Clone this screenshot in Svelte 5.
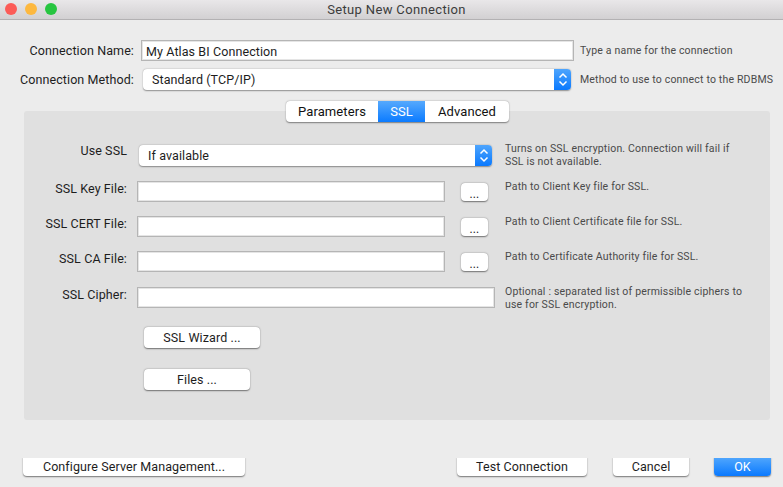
<script>
  const rows = [
    { label: 'SSL Key File:', hint: 'Path to Client Key file for SSL.' },
    { label: 'SSL CERT File:', hint: 'Path to Client Certificate file for SSL.' },
    { label: 'SSL CA File:', hint: 'Path to Certificate Authority file for SSL.' }
  ];
</script>

{#snippet stepper()}
  <span class="stepper">
    <svg width="10" height="15" viewBox="0 0 10 15" fill="none" stroke="#fff" stroke-width="1.5">
      <path d="M1.5 5.5 5 2l3.5 3.5" />
      <path d="M1.5 9.5 5 13l3.5-3.5" />
    </svg>
  </span>
{/snippet}

<div class="window">
  <header class="titlebar">
    <div class="lights">
      <span class="light red"></span>
      <span class="light yellow"></span>
      <span class="light green"></span>
    </div>
    <span class="title">Setup New Connection</span>
  </header>

  <div class="top-form">
    <label for="conn-name">Connection Name:</label>
    <input id="conn-name" class="name-input" type="text" value="My Atlas BI Connection" />
    <span class="hint">Type a name for the connection</span>

    <span class="label">Connection Method:</span>
    <div class="select method">
      <span>Standard (TCP/IP)</span>
      {@render stepper()}
    </div>
    <span class="hint">Method to use to connect to the RDBMS</span>
  </div>

  <div class="tabs">
    <button class="tab params">Parameters</button>
    <button class="tab ssl">SSL</button>
    <button class="tab advanced">Advanced</button>
  </div>

  <section class="panel">
    <div class="grid">
      <span class="label use-ssl">Use SSL</span>
      <div class="select ssl-select">
        <span>If available</span>
        {@render stepper()}
      </div>
      <p class="note first">Turns on SSL encryption. Connection will fail if<br />SSL is not available.</p>

      {#each rows as row}
        <span class="label">{row.label}</span>
        <div class="file">
          <input type="text" />
          <button class="btn dots">...</button>
        </div>
        <p class="note">{row.hint}</p>
      {/each}

      <span class="label">SSL Cipher:</span>
      <input type="text" class="cipher" />
      <p class="note cipher-note">Optional : separated list of permissible ciphers to<br />use for SSL encryption.</p>
    </div>

    <button class="btn wizard">SSL Wizard ...</button>
    <button class="btn files">Files ...</button>
  </section>

  <footer class="actions">
    <button class="btn cut configure">Configure Server Management...</button>
    <button class="btn cut test">Test Connection</button>
    <button class="btn cut cancel">Cancel</button>
    <button class="btn cut ok">OK</button>
  </footer>
</div>

<style>
  :global(body) {
    margin: 0;
    background: #ececec;
  }

  .window {
    width: 783px;
    height: 487px;
    overflow: hidden;
    background: #ececec;
    color: #1d1d1d;
    font-family: Roboto, "Liberation Sans", sans-serif;
    font-size: 12.5px;
    letter-spacing: 0.1px;
  }

  .titlebar {
    display: flex;
    position: relative;
    align-items: center;
    justify-content: center;
    box-sizing: border-box;
    height: 20px;
    border-bottom: 1px solid #b3b1b3;
    background: linear-gradient(#e9e7e9, #d2d0d2);
  }

  .title {
    color: #3c3c3c;
    margin-left: 10px;
    font-size: 13px;
    letter-spacing: 0.35px;
  }

  .lights {
    position: absolute;
    top: 3px;
    left: 5px;
    display: flex;
    gap: 8px;
  }

  .light {
    width: 12px;
    height: 12px;
    border-radius: 50%;
  }

  .red { background: #fc5b57; }
  .yellow { background: #fdb83f; }
  .green { background: #27c540; }

  .top-form {
    display: grid;
    grid-template-columns: 134px 440px auto;
    grid-template-rows: 29px 21px;
    margin-top: 20px;
    align-items: start;
  }

  .top-form label,
  .top-form .label {
    text-align: right;
    line-height: 22px;
  }

  .name-input {
    margin-left: 7px;
    width: 433px;
    padding: 1px 4px 0;
  }

  .method {
    margin-left: 9px;
    width: 428px;
    padding-left: 9px;
  }

  .hint {
    margin-left: 6px;
    color: #4a4a4a;
    font-size: 10.5px;
    letter-spacing: 0.18px;
    line-height: 21px;
    white-space: nowrap;
  }

  input {
    box-sizing: border-box;
    height: 21px;
    margin: 0;
    padding: 0 3px;
    border: 1px solid #b5b5b5;
    border-radius: 0;
    outline: 0;
    background: #fff;
    box-shadow: inset 0 0 0 1px rgba(181, 181, 181, 0.35);
    color: #1d1d1d;
    font: inherit;
    letter-spacing: inherit;
  }

  .select {
    display: flex;
    box-sizing: border-box;
    align-items: center;
    justify-content: space-between;
    height: 21px;
    border-radius: 4px;
    background: #fff;
    box-shadow: 0 0.5px 1.5px rgba(0, 0, 0, 0.4);
  }

  .stepper {
    display: flex;
    align-items: center;
    justify-content: center;
    width: 17px;
    height: 21px;
    border-radius: 0 4px 4px 0;
    background: linear-gradient(#4ea5fd, #0a79fe);
  }

  .tabs {
    display: flex;
    position: relative;
    z-index: 1;
    width: 223px;
    height: 21px;
    margin: 11px 0 -11px 286px;
    border-radius: 4px;
    background: #fff;
    box-shadow: 0 0.5px 1.5px rgba(0, 0, 0, 0.45);
    overflow: hidden;
  }

  .tab {
    height: 21px;
    padding: 0;
    border: 0;
    background: transparent;
    color: #111;
    font: inherit;
    font-size: 13px;
    letter-spacing: inherit;
  }

  .params { width: 92px; }
  .advanced { width: 84px; }

  .ssl {
    width: 47px;
    background: linear-gradient(#56a9fd, #0b7bff);
    color: #fff;
  }

  .panel {
    box-sizing: border-box;
    width: 746px;
    height: 309px;
    margin-left: 24px;
    padding-top: 34px;
    border-radius: 3px;
    background: #e0e0e0;
  }

  .grid {
    display: grid;
    grid-template-columns: 103px 358px 263px;
    grid-template-rows: 36px 35px 35px 36px 40px;
    column-gap: 10px;
    align-items: start;
  }

  .grid .label {
    text-align: right;
    line-height: 15px;
  }

  .use-ssl {
    margin-top: -2px;
  }

  .ssl-select {
    width: 353px;
    margin-left: 2px;
    padding-left: 9px;
  }

  .file {
    display: flex;
  }

  .file input {
    width: 308px;
  }

  .cipher {
    width: 358px;
  }

  .note {
    margin: -1px 0 0;
    color: #4a4a4a;
    font-size: 10.5px;
    letter-spacing: 0.18px;
    line-height: 13px;
    white-space: nowrap;
  }

  .first {
    margin-top: -3px;
  }

  .cipher-note {
    margin-top: -2px;
  }

  .btn {
    display: block;
    box-sizing: border-box;
    height: 21px;
    padding: 0;
    border: 0;
    border-radius: 4px;
    background: #fff;
    box-shadow: 0 0.5px 1.5px rgba(0, 0, 0, 0.5);
    color: #1d1d1d;
    font: inherit;
    letter-spacing: inherit;
  }

  .dots {
    width: 27px;
    height: 18px;
    margin: 2px 0 0 16px;
    padding-top: 3px;
    font-size: 12px;
  }

  .wizard {
    width: 116px;
    margin-left: 120px;
  }

  .files {
    width: 106px;
    margin: 21px 0 0 120px;
  }

  .actions {
    display: flex;
    margin: 38px 0 0 23px;
    width: 748px;
  }

  .cut {
    height: 18px;
    padding-bottom: 2px;
    border-radius: 0 0 4px 4px;
    line-height: 15px;
    clip-path: inset(0 -3px -3px -3px);
  }

  .configure { width: 222px; margin-right: auto; }
  .test { width: 130px; margin-right: 26px; }
  .cancel { width: 76px; margin-right: 25px; }

  .ok {
    width: 57px;
    background: linear-gradient(#4ea5fd, #0a79fe);
    color: #fff;
  }
</style>
